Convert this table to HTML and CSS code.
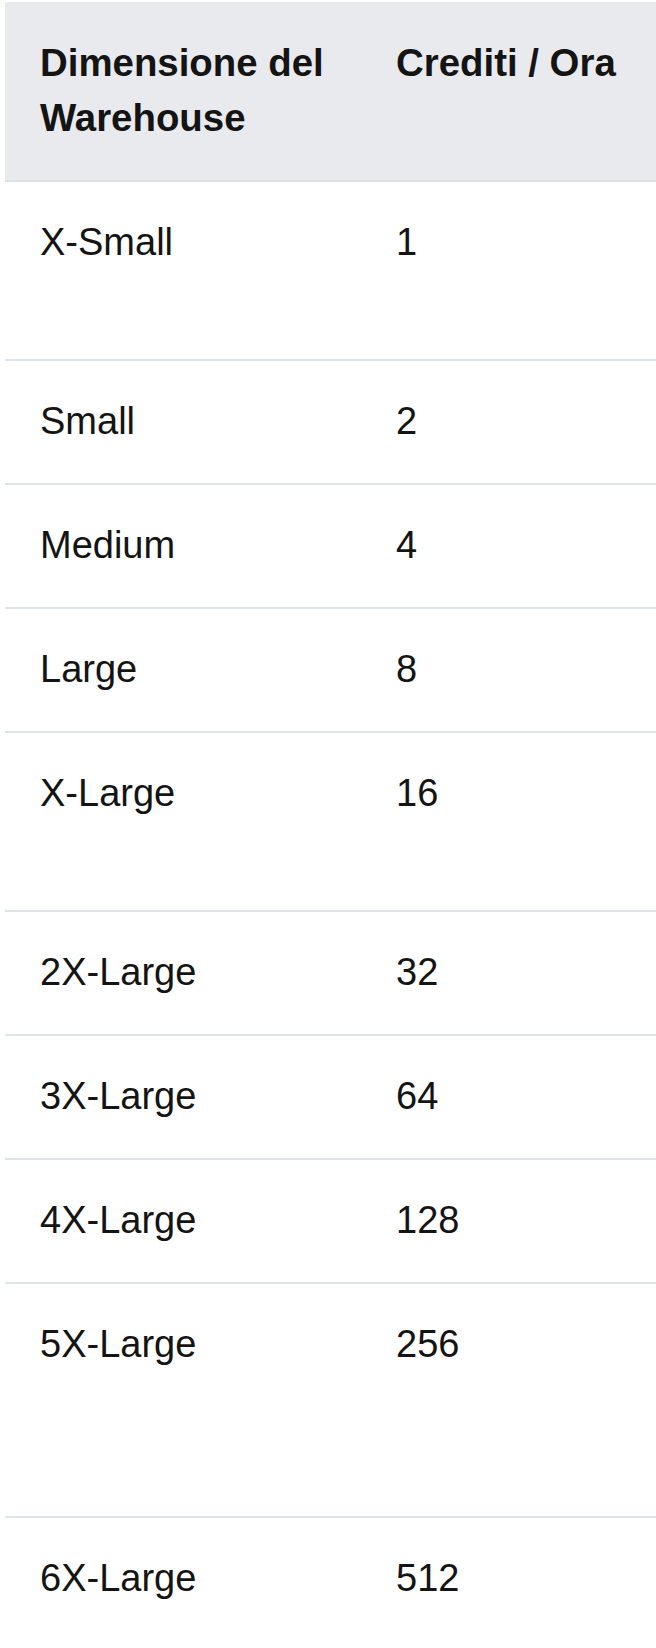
FILE: index.html
```html
<!DOCTYPE html>
<html lang="it">
<head>
<meta charset="utf-8">
<title>Crediti Warehouse</title>
<link rel="stylesheet" href="styles.css">
</head>
<body>
<div class="wrap">
<table class="tbl">
  <thead>
    <tr>
      <th class="c1">Dimensione del Warehouse</th>
      <th class="c2">Crediti / Ora</th>
    </tr>
  </thead>
  <tbody>
    <tr class="r2"><td>X-Small</td><td>1</td></tr>
    <tr><td>Small</td><td>2</td></tr>
    <tr><td>Medium</td><td>4</td></tr>
    <tr><td>Large</td><td>8</td></tr>
    <tr class="r2"><td>X-Large</td><td>16</td></tr>
    <tr><td>2X-Large</td><td>32</td></tr>
    <tr><td>3X-Large</td><td>64</td></tr>
    <tr><td>4X-Large</td><td>128</td></tr>
    <tr class="r3"><td>5X-Large</td><td>256</td></tr>
    <tr class="last"><td>6X-Large</td><td>512</td></tr>
  </tbody>
</table>
</div>
</body>
</html>
```
FILE: styles.css
```css
html, body {
  margin: 0;
  padding: 0;
  background: #ffffff;
  overflow: hidden;
}
.wrap {
  padding: 2px 0 0 5px;
}
.tbl {
  border-collapse: collapse;
  font-family: "Liberation Sans", Arial, sans-serif;
  color: #141414;
  font-size: 38px;
  line-height: 55px;
  width: 651px;
  table-layout: fixed;
}
.tbl th, .tbl td {
  text-align: left;
  vertical-align: top;
  padding: 33px 20px 34px 35px;
}
.tbl th {
  background: #e8eaee;
  font-weight: 700;
  font-size: 38.4px;
  padding-bottom: 35px;
  border-bottom: 2px solid #dde1e8;
}
.tbl .c1 { width: 301px; }
.tbl td {
  font-weight: 400;
  border-bottom: 2px solid #dfe3ea;
}
.tbl tr.r2 td { padding-bottom: 89px; }
.tbl tr.r3 td { padding-bottom: 144px; }
.tbl tr.last td { border-bottom: none; }
```
